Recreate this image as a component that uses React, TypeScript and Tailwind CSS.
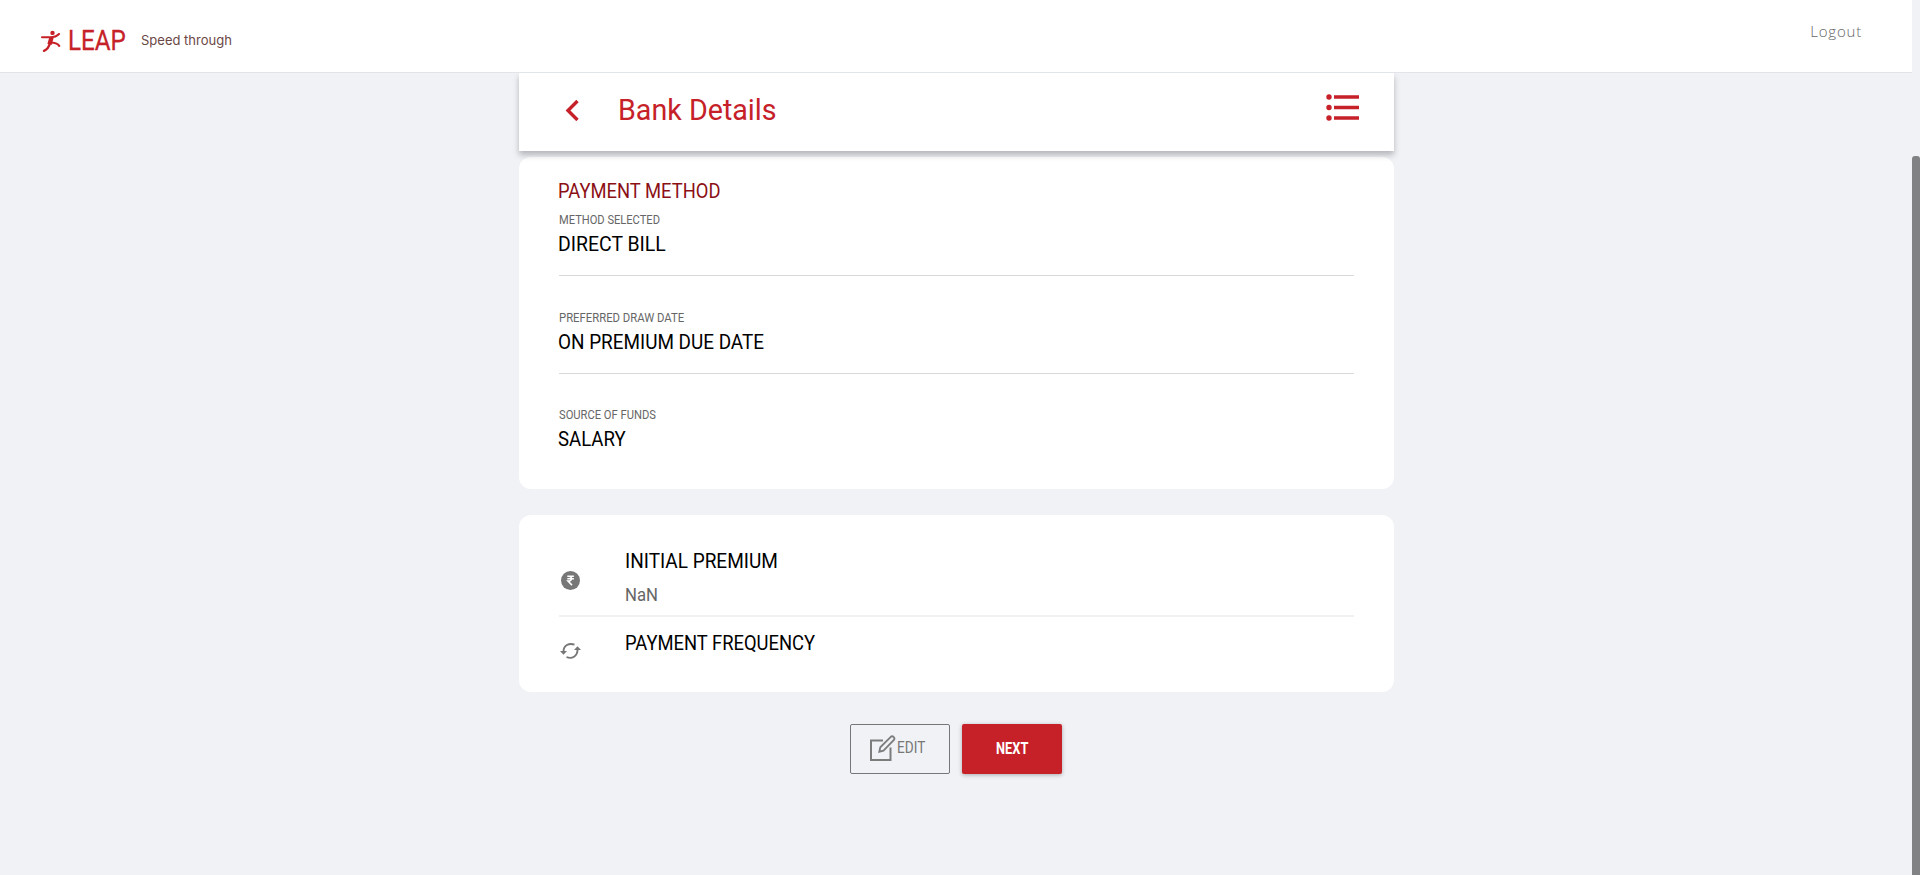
import React from "react";

const DIN = "font-['Roboto',sans-serif] whitespace-nowrap inline-block origin-left";

function Field({ label, value, labelScale, valueScale, line }: { label: string; value: string; labelScale: string; valueScale: string; line?: boolean }) {
  return (
    <div className={line ? "border-b border-[#d9d9d9]" : ""}>
      <div className="flex h-4 items-center text-[13px] leading-4 text-[#666]">
        <span className={`${DIN} ${labelScale}`}>{label}</span>
      </div>
      <div className={`-ml-px flex h-8 items-center text-[21px] leading-8 text-black ${line ? "mb-[15px]" : ""}`}>
        <span className={`${DIN} ${valueScale}`}>{value}</span>
      </div>
    </div>
  );
}

export default function App() {
  return (
    <div className="flex h-[875px] w-[1920px] overflow-hidden bg-[#f0f2f6]">
      <div className="flex w-[1912px] flex-col">
        <header className="flex h-[73px] shrink-0 items-start justify-between border-b border-[#e1e4e8] bg-white">
          <div className="flex pl-[41px]">
            <svg className="mt-[30px] h-[22px] w-[20px]" viewBox="0 0 20 22" fill="none" stroke="#c62128" strokeLinecap="round" strokeLinejoin="round">
              <circle cx="11.5" cy="2.9" r="2.2" fill="#c62128" stroke="none" />
              <path d="M1 7.2H9.5C13 7.2 16 6 18 4" strokeWidth="2.1" />
              <path d="M10.5 7.5L8.5 14.5" strokeWidth="4.4" strokeLinecap="butt" />
              <path d="M9 13C8 17 6 19.5 3 20.8" strokeWidth="2.4" />
              <path d="M9.5 12.5C13 12.5 16.5 13.5 18.2 15.8" strokeWidth="2.2" />
            </svg>
            <div className="ml-[7px] mt-[23px] w-[60px] text-[28.5px] leading-8 text-[#c62128] [-webkit-text-stroke:0.3px_#c62128]">
              <span className={`${DIN} scale-x-[0.85]`}>LEAP</span>
            </div>
            <div className="ml-[13px] mt-[30px] whitespace-nowrap font-['Inter',sans-serif] text-[13px] leading-5 text-[#6b4744]">Speed through</div>
          </div>
          <div className="mr-[50px] mt-[20px] whitespace-nowrap font-['Open_Sans',sans-serif] text-[15px] font-light leading-[22px] tracking-[0.8px] text-[#666]">Logout</div>
        </header>

        <main className="mx-auto flex w-[875px] flex-col">
          <div className="z-10 flex h-[78px] shrink-0 bg-white shadow-[0_4px_6px_rgba(0,0,0,0.25)] [clip-path:inset(0_-12px_-14px_-12px)]">
            <svg className="ml-[46px] mt-[26px] h-[22px] w-[16px]" viewBox="0 0 16 22" fill="none" stroke="#c62128" strokeWidth="3.4">
              <path d="M12.5 2L3 11.5L12.5 21" />
            </svg>
            <div className="ml-[37px] mt-[18px] grow text-[30px] leading-[36px] text-[#c62128]">
              <span className={`${DIN} scale-x-[0.955]`}>Bank Details</span>
            </div>
            <svg className="mr-[34px] mt-[20px] h-[29px] w-[34px]" viewBox="0 0 34 29" fill="#c62128">
              <circle cx="3" cy="4" r="2.7" />
              <circle cx="3" cy="14.5" r="2.7" />
              <circle cx="3" cy="25" r="2.7" />
              <path d="M8 2.2h25v3.6H8zM8 12.7h25v3.6H8zM8 23.2h25v3.6H8z" />
            </svg>
          </div>

          <section className="mt-[6px] h-[332px] shrink-0 rounded-[12px] bg-white px-[40px] pt-[22px]">
            <div className="-ml-px flex h-6 items-center text-[21px] leading-6 text-[#8b1014]">
              <span className={`${DIN} scale-x-[0.875]`}>PAYMENT METHOD</span>
            </div>
            <div className="mt-[9px] flex flex-col gap-[33.5px]">
              <Field label="METHOD SELECTED" value="DIRECT BILL" labelScale="scale-x-[0.855]" valueScale="scale-x-[0.925]" line />
              <Field label="PREFERRED DRAW DATE" value="ON PREMIUM DUE DATE" labelScale="scale-x-[0.87]" valueScale="scale-x-[0.9]" line />
              <Field label="SOURCE OF FUNDS" value="SALARY" labelScale="scale-x-[0.86]" valueScale="scale-x-[0.885]" />
            </div>
          </section>

          <section className="mt-[26px] h-[177px] shrink-0 rounded-[12px] bg-white px-[40px] pt-[30px]">
            <div className="flex h-[72px] border-b-2 border-[#f1f1f1]">
              <svg className="ml-[2px] mt-[26px] h-[20px] w-[20px]" viewBox="0 0 20 20" fill="none">
                <circle cx="9.5" cy="9.5" r="9.5" fill="#777" />
                <path d="M6.3 5.3h6.6M6.3 7.7h6.6M7 5.3c4.7-.3 4.7 5 0 4.8l4 4" stroke="#fff" strokeWidth="1.5" />
              </svg>
              <div className="-mt-px ml-[44px]">
                <div className="h-8 text-[21px] leading-8 text-black"><span className={`${DIN} scale-x-[0.905]`}>INITIAL PREMIUM</span></div>
                <div className="mt-[4px] h-7 text-[19px] leading-7 text-[#666]"><span className={`${DIN} scale-x-[0.88]`}>NaN</span></div>
              </div>
            </div>
            <div className="flex">
              <svg className="ml-[1px] mt-[24px] h-[20px] w-[22px]" viewBox="0 0 22 20" fill="none" stroke="#777" strokeWidth="1.9">
                <path d="M3.5 10.5C3.5 4.5 9 1.5 14.5 3.7M17.5 9C17.5 15 12 18.5 6.5 16" />
                <path d="M0 10h7L3.5 13.7zM14 9h7L17.5 5.3z" fill="#777" stroke="none" />
              </svg>
              <div className="ml-[43px] mt-[9px] h-8 text-[21px] leading-8 text-black"><span className={`${DIN} scale-x-[0.875]`}>PAYMENT FREQUENCY</span></div>
            </div>
          </section>

          <div className="mt-[32px] flex justify-center gap-[12px]">
            <button className="flex h-[50px] w-[100px] items-center rounded-[2px] border border-[#777] pl-[19px] text-[16px] leading-5 text-[#777]">
              <svg className="mb-[2px] h-[26px] w-[26px] shrink-0" viewBox="0 0 26 26" fill="none" stroke="#7c7c7c" strokeWidth="2">
                <path d="M13 5.5H1V25H20.500V12.500" />
                <path d="M9.300 16.700L10.300 12.300L20.800 1.800C22.800 .2 25.500 2.900 23.900 5L13.500 15.600Z" strokeWidth="1.8" />
              </svg>
              <span className={`${DIN} mb-[2px] ml-px scale-x-[0.85]`}>EDIT</span>
            </button>
            <button className="h-[50px] w-[100px] rounded-[2px] bg-[#c62128] pb-[2px] text-[16px] font-bold leading-5 text-white shadow-[0_1px_4px_rgba(0,0,0,0.3)]">
              <span className="inline-block scale-x-[0.8] font-['Roboto',sans-serif]">NEXT</span>
            </button>
          </div>
        </main>
      </div>
      <div className="h-full w-[8px] pt-[156px]">
        <div className="h-[730px] rounded-[3px] bg-[#808284]" />
      </div>
    </div>
  );
}
